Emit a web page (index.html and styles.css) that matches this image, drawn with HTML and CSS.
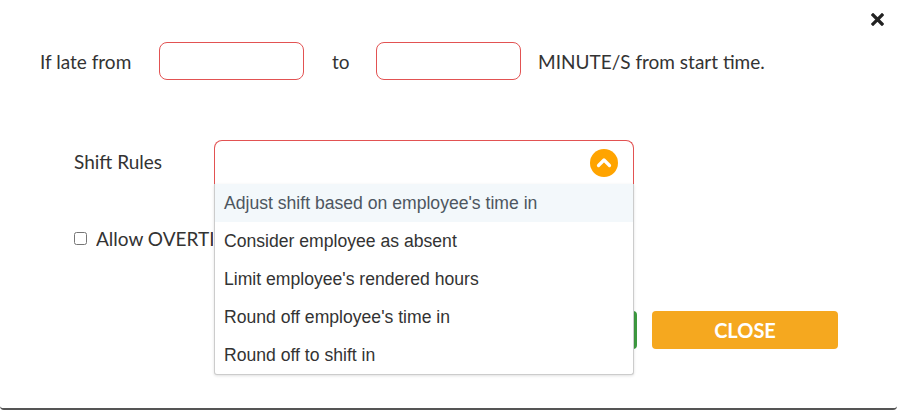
FILE: index.html
```html
<!DOCTYPE html>
<html>
<head>
<meta charset="utf-8">
<link rel="stylesheet" href="styles.css">
</head>
<body>
<div class="modal">
  <button class="close-x" aria-label="close">
    <svg width="13" height="13" viewBox="0 0 13 13"><path d="M2 2 L11 11 M11 2 L2 11" stroke="#222" stroke-width="3.2" stroke-linecap="square"/></svg>
  </button>
  <div class="row-late">
    <span class="lbl-late">If late from</span>
    <input class="field" type="text">
    <span class="lbl-to">to</span>
    <input class="field" type="text">
    <span class="lbl-min">MINUTE/S from start time.</span>
  </div>
  <div class="row-rules">
    <span class="lbl-rules">Shift Rules</span>
    <div class="select-wrap">
      <div class="select-box">
        <span class="chev">
          <svg width="28" height="28" viewBox="0 0 28 28"><circle cx="14" cy="14" r="14" fill="#ffa400"/><path d="M8.5 16.5 L14 11 L19.5 16.5" fill="none" stroke="#fff" stroke-width="3.2" stroke-linecap="round" stroke-linejoin="round"/></svg>
        </span>
      </div>
      <ul class="menu">
        <li class="active">Adjust shift based on employee's time in</li>
        <li>Consider employee as absent</li>
        <li>Limit employee's rendered hours</li>
        <li>Round off employee's time in</li>
        <li>Round off to shift in</li>
      </ul>
    </div>
  </div>
  <div class="row-ot">
    <input type="checkbox" class="cb">
    <span class="lbl-ot">Allow OVERTIME</span>
  </div>
  <div class="row-btns">
    <button class="btn btn-save">SAVE</button>
    <button class="btn btn-close">CLOSE</button>
  </div>
</div>
</body>
</html>
```

FILE: styles.css
```css
html, body {
  margin: 0;
  padding: 0;
  background: #fff;
}
.modal {
  position: relative;
  width: 897px;
  height: 410px;
  box-sizing: border-box;
  border-bottom: 2px solid #555;
  border-radius: 0 0 4px 4px;
  font-family: Lato, "Noto Sans", sans-serif;
  color: #333;
}
.close-x {
  position: absolute;
  top: 13px;
  right: 13px;
  border: 0;
  background: none;
  padding: 0;
  width: 13px;
  height: 13px;
  line-height: 0;
}
.row-late {
  display: flex;
  align-items: center;
  padding: 42px 0 0 40px;
  height: 38px;
  font-size: 19px;
}
.lbl-late {
  width: 119px;
}
.field {
  width: 145px;
  height: 38px;
  box-sizing: border-box;
  border: 1px solid #e25252;
  border-radius: 8px;
  background: #fff;
  margin: 0;
  outline: none;
}
.lbl-to {
  width: 44px;
  margin-left: 28px;
}
.lbl-min {
  margin-left: 17px;
}
.row-rules {
  display: flex;
  align-items: flex-start;
  height: 44px;
  padding: 60px 0 0 74px;
  font-size: 19px;
}
.lbl-rules {
  width: 140px;
  line-height: 44px;
}
.select-wrap {
  position: relative;
  width: 420px;
}
.select-box {
  height: 44px;
  box-sizing: border-box;
  border: 1px solid #e25252;
  border-bottom: 0;
  border-radius: 8px 8px 0 0;
  display: flex;
  justify-content: flex-end;
  align-items: center;
  padding-right: 15px;
}
.chev {
  width: 28px;
  height: 28px;
  line-height: 0;
}
.menu {
  position: absolute;
  top: 44px;
  left: 0;
  z-index: 5;
  width: 420px;
  box-sizing: border-box;
  margin: 0;
  padding: 0;
  list-style: none;
  background: #fff;
  border: 1px solid #ccc;
  border-top: 0;
  border-radius: 0 0 3px 3px;
  box-shadow: 0 1px 3px rgba(0,0,0,0.12);
  font-family: "Liberation Sans", Arial, sans-serif;
  font-size: 17.6px;
  color: #333;
}
.menu li {
  height: 38px;
  line-height: 38px;
  padding-left: 9px;
}
.menu li.active {
  background: #f3f8fb;
  color: #4d5660;
}
.row-ot {
  display: flex;
  align-items: center;
  padding: 44px 0 0 74px;
  height: 20px;
  font-size: 19px;
}
.cb {
  width: 13px;
  height: 13px;
  margin: 0 9px 0 0;
}
.lbl-ot {
  max-width: 117px;
  overflow: hidden;
  white-space: nowrap;
}
.row-btns {
  display: flex;
  justify-content: flex-end;
  gap: 15px;
  padding: 63px 59px 0 0;
}
.btn {
  width: 186px;
  height: 38px;
  border: 0;
  border-radius: 4px;
  color: #fff;
  font-family: Lato, "Noto Sans", sans-serif;
  font-weight: 700;
  font-size: 20px;
  padding: 0;
}
.btn-save {
  background: #3d9a40;
}
.btn-close {
  background: #f5a81f;
}
```
